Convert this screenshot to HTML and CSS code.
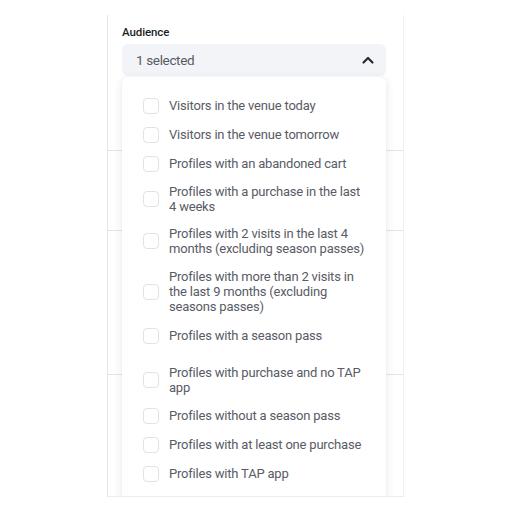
FILE: index.html
```html
<!DOCTYPE html>
<html>
<head>
<meta charset="utf-8">
<link rel="stylesheet" href="styles.css">
</head>
<body>
<div class="panel">
  <div class="block block-1">
    <div class="label">Audience</div>
    <div class="trigger">
      <span class="trigger-text">1 selected</span>
      <svg class="chev" width="14" height="10" viewBox="0 0 14 10"><path d="M2.5 7.5 L7 3 L11.5 7.5" fill="none" stroke="#262b36" stroke-width="2.2" stroke-linecap="round" stroke-linejoin="round"/></svg>
    </div>
  </div>
  <div class="block block-2"></div>
  <div class="block block-3"></div>
  <div class="block block-4"></div>

  <div class="menu">
    <div class="item"><span class="box"></span><span class="txt">Visitors in the venue today</span></div>
    <div class="item"><span class="box"></span><span class="txt">Visitors in the venue tomorrow</span></div>
    <div class="item"><span class="box"></span><span class="txt">Profiles with an abandoned cart</span></div>
    <div class="item"><span class="box"></span><span class="txt">Profiles with a purchase in the last 4 weeks</span></div>
    <div class="item"><span class="box"></span><span class="txt">Profiles with 2 visits in the last 4 months (excluding season passes)</span></div>
    <div class="item tall"><span class="box"></span><span class="txt">Profiles with more than 2 visits in the last 9 months (excluding seasons passes)</span></div>
    <div class="item"><span class="box"></span><span class="txt">Profiles with a season pass</span></div>
    <div class="item spaced"><span class="box"></span><span class="txt">Profiles with purchase and no TAP app</span></div>
    <div class="item"><span class="box"></span><span class="txt">Profiles without a season pass</span></div>
    <div class="item"><span class="box"></span><span class="txt">Profiles with at least one purchase</span></div>
    <div class="item"><span class="box"></span><span class="txt">Profiles with TAP app</span></div>
  </div>
</div>
</body>
</html>
```
FILE: styles.css
```css
* { box-sizing: border-box; }
html, body { margin: 0; padding: 0; background: #ffffff; }
body { font-family: Roboto, "Liberation Sans", sans-serif; }

.panel {
  position: relative;
  margin: 15px 0 0 107px;
  width: 297px;
  height: 482px;
  border-left: 1px solid #e4e4e6;
  border-right: 1px solid #efeff6;
  border-bottom: 1px solid #ececee;
  overflow: hidden;
  display: flex;
  flex-direction: column;
}

.block { border-bottom: 1px solid #e3e3e5; flex: none; }
.block-1 { height: 136px; padding: 9px 0 0 14px; }
.block-2 { height: 80px; }
.block-3 { height: 144px; }
.block-4 { border-bottom: none; flex: 1; }

.label {
  font-size: 11.5px;
  line-height: 16px;
  font-weight: 500;
  letter-spacing: -0.1px;
  color: #1d1f24;
  margin-bottom: 4px;
}

.trigger {
  width: 264px;
  height: 32px;
  background: #f3f4f8;
  border-radius: 6px;
  display: flex;
  align-items: center;
  justify-content: space-between;
  padding: 0 11px 0 14px;
}
.trigger-text { font-size: 13.5px; letter-spacing: -0.35px; color: #585a62; }
.chev { display: block; }

.menu {
  position: absolute;
  left: 14px;
  top: 62px;
  width: 264px;
  height: 460px;
  background: #ffffff;
  border-radius: 6px;
  box-shadow: 0 2px 10px rgba(30, 35, 60, 0.10), 0 0 2px rgba(30, 35, 60, 0.06);
  padding: 14px 18px 0 21px;
}

.item {
  display: flex;
  align-items: center;
  min-height: 29px;
  padding: 6px 0;
}
.item.tall { padding: 7px 0; }
.item.spaced { margin-top: 9px; }

.box {
  flex: none;
  width: 16px;
  height: 16px;
  border: 1.5px solid #dfe2e6;
  border-radius: 4px;
  margin-right: 10px;
}

.txt {
  font-size: 13px;
  letter-spacing: -0.2px;
  line-height: 15px;
  color: #595b66;
}
```
